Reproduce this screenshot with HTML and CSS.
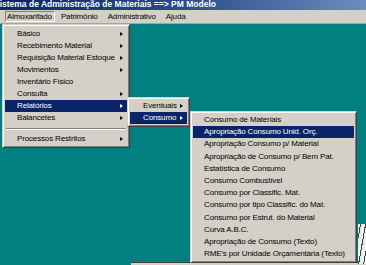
FILE: index.html
```html
<!DOCTYPE html>
<html lang="pt">
<head>
<meta charset="utf-8">
<title>PM Modelo</title>
<link rel="stylesheet" href="styles.css">
</head>
<body>
<div class="app">
  <div class="titlebar"><span class="title-text">Sistema de Administração de Materiais ==&gt; PM Modelo</span></div>
  <div class="menubar">
    <span class="mb-item pressed">Almoxarifado</span>
    <span class="mb-item">Patrimônio</span>
    <span class="mb-item">Administrativo</span>
    <span class="mb-item">Ajuda</span>
  </div>
  <div class="desktop">
    <div class="bottom-window"></div>
    <div class="side-picture"></div>

    <div class="menu menu-main">
      <div class="mi sub">Básico</div>
      <div class="mi sub">Recebimento Material</div>
      <div class="mi sub">Requisição Material Estoque</div>
      <div class="mi sub">Movimentos</div>
      <div class="mi">Inventário Físico</div>
      <div class="mi sub">Consulta</div>
      <div class="mi sub active">Relatórios</div>
      <div class="mi sub">Balancetes</div>
      <div class="sep"></div>
      <div class="mi sub">Processos Restritos</div>
    </div>

    <div class="menu menu-rel">
      <div class="mi sub">Eventuais</div>
      <div class="mi sub active">Consumo</div>
    </div>

    <div class="menu menu-cons">
      <div class="mi">Consumo de Materiais</div>
      <div class="mi active">Apropriação Consumo Unid. Orç.</div>
      <div class="mi">Apropriação Consumo p/ Material</div>
      <div class="mi">Apropriação de Consumo p/ Bem Pat.</div>
      <div class="mi">Estatística de Consumo</div>
      <div class="mi">Consumo Combustível</div>
      <div class="mi">Consumo por Classific. Mat.</div>
      <div class="mi">Consumo por tipo Classific. do Mat.</div>
      <div class="mi">Consumo por Estrut. do Material</div>
      <div class="mi">Curva A.B.C.</div>
      <div class="mi">Apropriação de Consumo (Texto)</div>
      <div class="mi">RME's por Unidade Orçamentária (Texto)</div>
    </div>
  </div>
</div>
</body>
</html>
```

FILE: styles.css
```css
* { box-sizing: border-box; }
html, body {
  margin: 0;
  padding: 0;
  width: 366px;
  height: 265px;
  overflow: hidden;
  background: #008080;
}
.app {
  width: 366px;
  height: 265px;
  display: flex;
  flex-direction: column;
  font-family: "Liberation Sans", Arial, sans-serif;
  font-size: 8px;
  letter-spacing: -0.15px;
  color: #000;
}
.titlebar {
  height: 10px;
  flex: none;
  background: linear-gradient(to right, #0a246a 0%, #2a4c8c 50%, #6b8dc0 100%);
  overflow: hidden;
  white-space: nowrap;
}
.title-text {
  display: block;
  margin-left: -6px;
  color: #fff;
  font-weight: bold;
  font-size: 8.5px;
  letter-spacing: 0;
  line-height: 9px;
}
.menubar {
  height: 14px;
  flex: none;
  background: #d4d0c8;
  display: flex;
  align-items: center;
  padding-left: 5px;
  border-bottom: 1px solid #a8a49c;
}
.mb-item {
  height: 11px;
  line-height: 10px;
  padding: 0 2px 0 1px;
  margin-right: 5px;
  border: 1px solid transparent;
}
.mb-item.pressed {
  border-color: #808080 #fff #fff #808080;
  margin-right: 4px;
}
.desktop {
  flex: 1;
  position: relative;
  background: #008080;
}
.menu {
  position: absolute;
  background: #d4d0c8;
  padding: 2px 2px;
  border: 1px solid;
  border-color: #d4d0c8 #404040 #404040 #d4d0c8;
  box-shadow: inset 1px 1px 0 #fff, inset -1px -1px 0 #808080;
}
.mi {
  position: relative;
  height: 12px;
  line-height: 12px;
  white-space: nowrap;
  padding-left: 12px;
}
.mi.sub::after {
  content: "";
  position: absolute;
  right: 4px;
  top: 3.5px;
  border-left: 3px solid #000;
  border-top: 2.5px solid transparent;
  border-bottom: 2.5px solid transparent;
}
.mi.active {
  background: #0a246a;
  color: #fff;
}
.mi.active.sub::after {
  border-left-color: #fff;
}
.sep {
  height: 9px;
  margin: 0 1px;
  position: relative;
}
.sep::before {
  content: "";
  position: absolute;
  left: 0;
  right: 0;
  top: 4px;
  border-top: 1px solid #808080;
  border-bottom: 1px solid #fff;
}
.menu-main {
  left: 2px;
  top: 0px;
  width: 128px;
  padding-top: 3px;
}
.menu-rel {
  left: 127px;
  top: 73px;
  width: 63px;
}
.menu-rel .mi { padding-left: 13px; }
.menu-cons {
  left: 190px;
  top: 87px;
  width: 167px;
}
.menu-cons .mi {
  height: 12.2px;
  line-height: 12px;
  padding-left: 11px;
}
.bottom-window {
  position: absolute;
  left: 131px;
  top: 238px;
  width: 240px;
  height: 10px;
  background: #d4d0c8;
  border-top: 1px solid #404040;
}
.side-picture {
  position: absolute;
  left: 358px;
  top: 200px;
  width: 8px;
  height: 40px;
  background: repeating-linear-gradient(100deg, #f4f4f0 0 2px, #2f4a40 2px 3px, #e8ece8 3px 5px);
}
```
